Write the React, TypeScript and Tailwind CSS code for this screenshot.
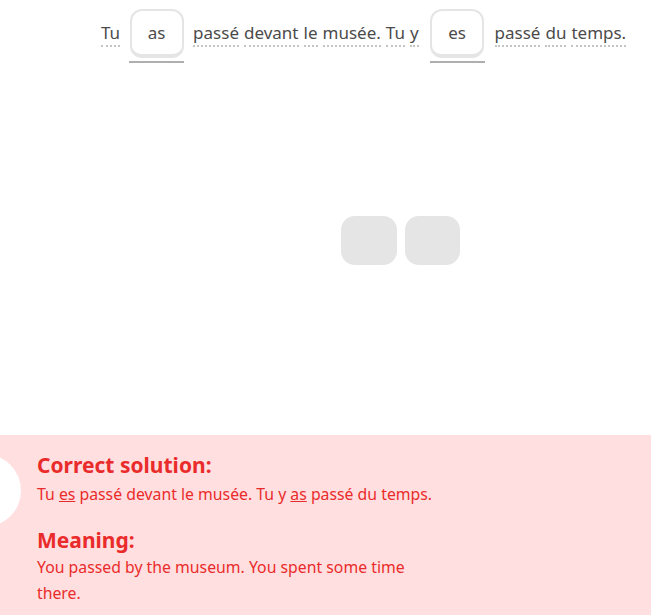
import React from "react";

const W = ({ children }: { children: React.ReactNode }) => (
  <span className="border-b-2 border-dotted border-[#c4c4c4] pb-0">{children}</span>
);

const Blank = ({ text }: { text: string }) => (
  <div className="flex flex-col items-center">
    <div className="w-[54px] h-[49px] rounded-[12px] border-2 border-b-4 border-[#e5e5e5] flex items-center justify-center text-[#4b4b4b]">
      {text}
    </div>
    <div className="mt-[3px] w-[55px] h-[2px] bg-[#afafaf]" />
  </div>
);

export default function App() {
  return (
    <div
      className="w-[651px] h-[615px] bg-white flex flex-col overflow-hidden relative"
      style={{ fontFamily: '"Noto Sans", "Open Sans", sans-serif' }}
    >
      <div className="pt-[9px] pl-[101px] flex items-start gap-[9px] text-[17px] text-[#4b4b4b]">
        <div className="h-[49px] flex items-center">
          <W>Tu</W>
        </div>
        <Blank text="as" />
        <div className="h-[49px] flex items-center gap-[5px]">
          <W>passé</W>
          <W>devant</W>
          <W>le</W>
          <W>musée.</W>
          <W>Tu</W>
          <W>y</W>
        </div>
        <div className="ml-[2px]">
          <Blank text="es" />
        </div>
        <div className="h-[49px] flex items-center gap-[5px] ml-[1px]">
          <W>passé</W>
          <W>du</W>
          <W>temps.</W>
        </div>
      </div>

      <div className="flex-1 flex justify-start pl-[341px] pt-[153px] gap-[8px]">
        <div className="w-[56px] h-[49px] rounded-[14px] bg-[#e5e5e5]" />
        <div className="w-[55px] h-[49px] rounded-[14px] bg-[#e5e5e5]" />
      </div>

      <div className="h-[180px] bg-[#ffdfe0] relative pl-[37px] pt-[17px] text-[#ea2b2b]">
        <div className="absolute left-[-52px] top-[19px] w-[73px] h-[73px] rounded-full bg-white" />
        <div className="text-[21px] font-bold leading-[26px]">Correct solution:</div>
        <div className="text-[15.8px] leading-[26px] mt-[3px]">
          Tu <span className="underline">es</span> passé devant le musée. Tu y{" "}
          <span className="underline">as</span> passé du temps.
        </div>
        <div className="text-[21px] font-bold leading-[26px] mt-[20px]">Meaning:</div>
        <div className="text-[15.8px] leading-[26px] mt-[1px] w-[390px]">
          You passed by the museum. You spent some time there.
        </div>
      </div>
    </div>
  );
}
